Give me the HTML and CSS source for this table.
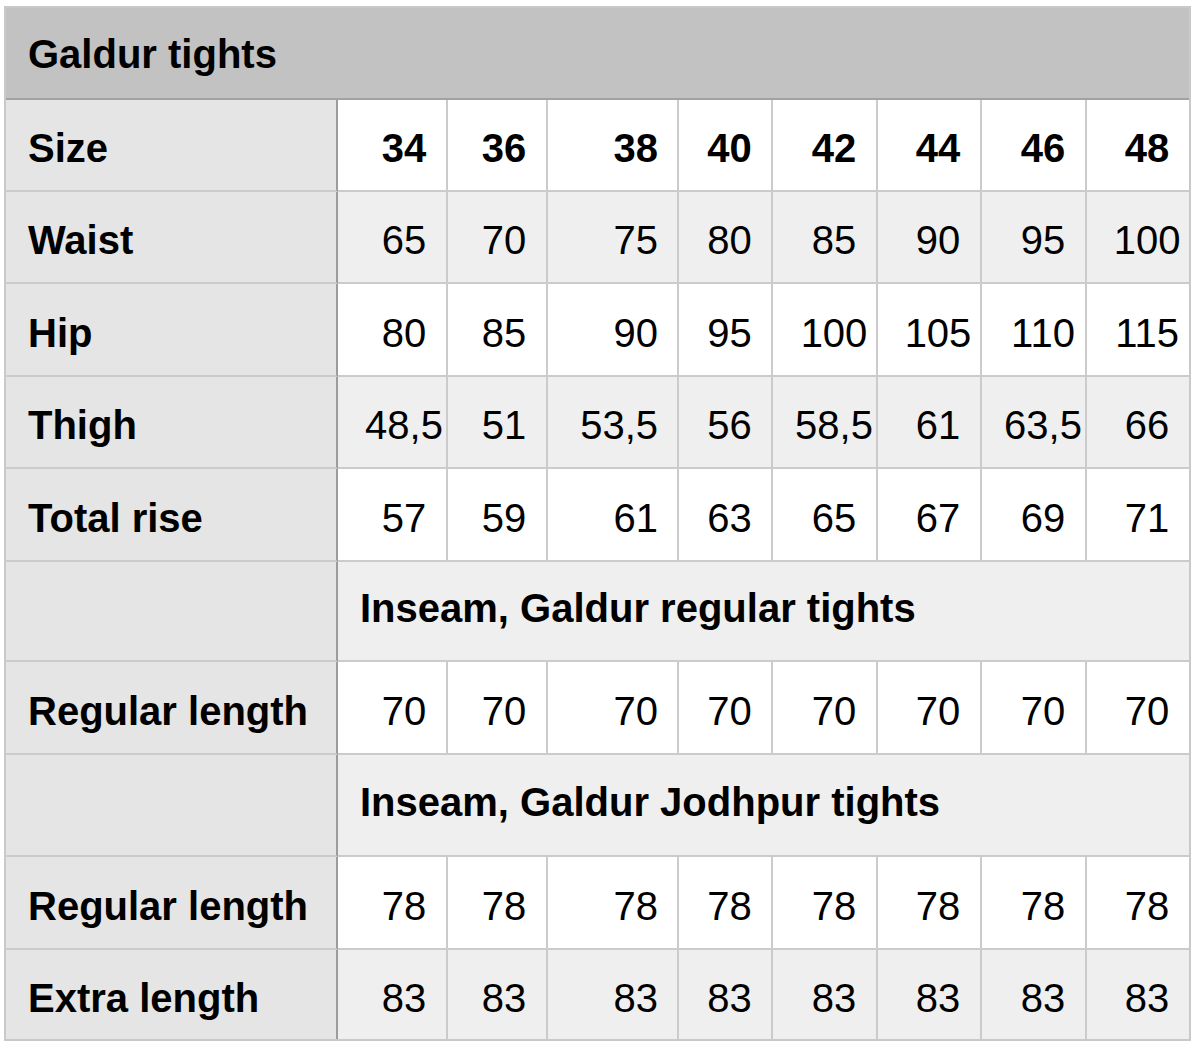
FILE: index.html
```html
<!DOCTYPE html>
<html lang="en">
<head>
<meta charset="utf-8">
<title>Galdur tights</title>
<link rel="stylesheet" href="styles.css">
</head>
<body>
<table class="sizes">
  <colgroup>
    <col class="col-label">
    <col class="col-a"><col class="col-b"><col class="col-c"><col class="col-d">
    <col class="col-e"><col class="col-f"><col class="col-g"><col class="col-h">
  </colgroup>
  <tr class="title-row"><th class="title" colspan="9">Galdur tights</th></tr>
  <tr class="row-std white head"><th class="label">Size</th><td>34</td><td>36</td><td>38</td><td>40</td><td>42</td><td>44</td><td>46</td><td>48</td></tr>
  <tr class="row-std shade"><th class="label">Waist</th><td>65</td><td>70</td><td>75</td><td>80</td><td>85</td><td>90</td><td>95</td><td>100</td></tr>
  <tr class="row-tall white"><th class="label">Hip</th><td>80</td><td>85</td><td>90</td><td>95</td><td>100</td><td>105</td><td>110</td><td>115</td></tr>
  <tr class="row-std shade"><th class="label">Thigh</th><td>48,5</td><td>51</td><td>53,5</td><td>56</td><td>58,5</td><td>61</td><td>63,5</td><td>66</td></tr>
  <tr class="row-tall white"><th class="label">Total rise</th><td>57</td><td>59</td><td>61</td><td>63</td><td>65</td><td>67</td><td>69</td><td>71</td></tr>
  <tr class="row-section1 shade"><th class="label"></th><td class="section" colspan="8">Inseam, Galdur regular tights</td></tr>
  <tr class="row-tall white"><th class="label">Regular length</th><td>70</td><td>70</td><td>70</td><td>70</td><td>70</td><td>70</td><td>70</td><td>70</td></tr>
  <tr class="row-section2 shade"><th class="label"></th><td class="section" colspan="8">Inseam, Galdur Jodhpur tights</td></tr>
  <tr class="row-tall white"><th class="label">Regular length</th><td>78</td><td>78</td><td>78</td><td>78</td><td>78</td><td>78</td><td>78</td><td>78</td></tr>
  <tr class="row-last shade"><th class="label">Extra length</th><td>83</td><td>83</td><td>83</td><td>83</td><td>83</td><td>83</td><td>83</td><td>83</td></tr>
</table>
</body>
</html>
```

FILE: styles.css
```css
html, body {
  margin: 0;
  padding: 0;
  background: #ffffff;
}

body {
  font-family: "Liberation Sans", Arial, Helvetica, sans-serif;
  color: #000000;
}

.sizes {
  margin: 6px 0 0 4px;
  border: 2px solid #c9c9c9;
  border-spacing: 0;
  border-collapse: separate;
  table-layout: fixed;
  width: 1187px;
  font-size: 40px;
  line-height: 46px;
}

.col-label { width: 332px; }
.col-a { width: 110px; }
.col-b { width: 100px; }
.col-c { width: 131px; }
.col-d { width: 94px; }
.col-e { width: 105px; }
.col-f { width: 104px; }
.col-g { width: 105px; }
.col-h { width: 102px; }

.sizes th,
.sizes td {
  box-sizing: border-box;
  padding: 6px 0 0 0;
  border-right: 2px solid #cbcbcb;
  border-bottom: 2px solid #cbcbcb;
  vertical-align: middle;
  white-space: nowrap;
  overflow: visible;
}

.sizes td:last-child { border-right: none; }
.sizes .row-last th,
.sizes .row-last td { border-bottom: none; }

.title-row { height: 92px; }
.row-std { height: 92px; }
.row-tall { height: 93px; }
.row-section1 { height: 100px; }
.row-section2 { height: 102px; }
.row-last { height: 89px; }

.sizes .title {
  background: #c1c2c1;
  border-right: none;
  border-bottom: 2px solid #a2a2a2;
  text-align: left;
  font-weight: bold;
  padding: 2px 0 0 22px;
}

.sizes .label {
  background: #e4e5e4;
  text-align: left;
  font-weight: bold;
  padding-left: 22px;
  border-right: 2px solid #9c9c9c;
}

.white td { background: #ffffff; }
.shade td { background: #efefef; }

.head td { font-weight: bold; }

.sizes td { text-align: center; }
.sizes td:nth-child(2) { padding-left: 24px; }
.sizes td:nth-child(3) { padding-left: 14px; }
.sizes td:nth-child(4) { text-align: right; padding-right: 19px; }
.sizes td:nth-child(5) { padding-left: 9px; }
.sizes td:nth-child(6) { padding-left: 19px; }
.sizes td:nth-child(7) { padding-left: 18px; }
.sizes td:nth-child(8) { padding-left: 19px; }
.sizes td:nth-child(9) { padding-left: 18px; }

.sizes td.section {
  text-align: left;
  font-weight: bold;
  padding: 0 0 6px 22px;
}
```
